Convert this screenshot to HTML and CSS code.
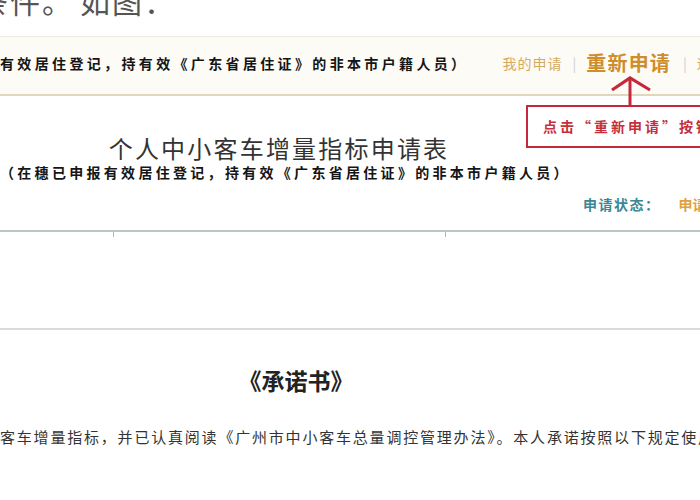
FILE: index.html
```html
<!DOCTYPE html>
<html lang="zh-CN">
<head>
<meta charset="utf-8">
<title>个人中小客车增量指标申请表</title>
<link rel="stylesheet" href="styles.css">
</head>
<body>
<div class="page">
  <p class="intro">条件。<span class="intro-gap">如图：</span></p>
  <div class="bar">
    <span class="bar-desc">有效居住登记，持有效《广东省居住证》的非本市户籍人员）</span>
    <nav class="bar-links">
      <a class="link-small">我的申请</a><span class="sep">|</span><a class="link-big">重新申请</a><span class="sep">|</span><a class="link-small">退出</a>
    </nav>
  </div>
  <header class="form-head">
    <h1 class="form-title">个人中小客车增量指标申请表</h1>
    <p class="form-subtitle">（在穗已申报有效居住登记，持有效《广东省居住证》的非本市户籍人员）</p>
  </header>
  <div class="status">
    <span class="status-label">申请状态：</span><span class="status-value">申请中</span>
  </div>
  <div class="table-head"><span class="col"></span><span class="col"></span><span class="col"></span></div>
  <div class="table-body"></div>
  <section class="pledge">
    <h2 class="pledge-title">《承诺书》</h2>
    <p class="pledge-text">客车增量指标，并已认真阅读《广州市中小客车总量调控管理办法》。本人承诺按照以下规定使用</p>
  </section>

  <svg class="callout-arrow" width="50" height="34" viewBox="0 0 50 34">
    <path d="M22 2 L22 32" stroke="#c4283a" stroke-width="3" fill="none"/>
    <path d="M4 14 L22 2 L42 14" stroke="#c4283a" stroke-width="3.2" fill="none" stroke-linejoin="miter"/>
  </svg>
  <div class="callout-box">点击“重新申请”按钮</div>
</div>
</body>
</html>
```
FILE: styles.css
```css
html, body {
  margin: 0;
  padding: 0;
  background: #ffffff;
}
body {
  font-family: "Noto Sans CJK SC", "Noto Sans", sans-serif;
  color: #222;
}
.page {
  position: relative;
  width: 700px;
  height: 500px;
  overflow: hidden;
  white-space: nowrap;
}
.intro {
  margin: -15px 0 21px -22px;
  font-size: 30px;
  line-height: 30px;
  letter-spacing: 2px;
  color: #555;
  font-weight: 400;
}
.intro-gap {
  margin-left: 6px;
}
.bar {
  display: flex;
  align-items: center;
  height: 51px;
  padding-bottom: 6px;
  border-top: 1px solid #efe9dd;
  border-bottom: 2px solid #e4d6bc;
  background: #fdfbf6;
}
.bar-desc {
  font-size: 14px;
  font-weight: 700;
  letter-spacing: 3.35px;
  color: #151515;
}
.bar-links {
  display: flex;
  align-items: center;
  margin-left: 34px;
  gap: 8px;
}
.link-small {
  font-size: 14px;
  letter-spacing: 1px;
  color: #d4aa62;
}
.link-big {
  font-size: 20px;
  font-weight: 700;
  letter-spacing: 1.2px;
  color: #cf8d2c;
  margin-right: 2px;
}
.sep {
  font-size: 14px;
  color: #cfcfcf;
  margin: 0 2px;
}
.form-head {
  width: 558px;
  margin-top: 39px;
  text-align: center;
}
.form-title {
  margin: 0;
  font-size: 24px;
  line-height: 26px;
  font-weight: 400;
  letter-spacing: 2.2px;
  color: #333;
}
.form-subtitle {
  margin: 2px 0 0;
  font-size: 14px;
  line-height: 18px;
  font-weight: 700;
  letter-spacing: 3.3px;
  color: #151515;
}
.status {
  display: flex;
  gap: 18px;
  margin-top: 13px;
  padding-left: 583px;
  font-size: 14px;
  line-height: 20px;
  font-weight: 700;
}
.status-label {
  color: #3c8794;
  letter-spacing: 1.5px;
}
.status-value {
  color: #e0a040;
}
.table-head {
  display: grid;
  grid-template-columns: 113px 332px 1fr;
  height: 5px;
  margin-top: 16px;
  border-top: 2px solid #b9c7c7;
}
.table-head .col + .col {
  border-left: 1px solid #b0b8b8;
}
.table-body {
  height: 91px;
  border-bottom: 2px solid #dadada;
}
.pledge {
  width: 592px;
}
.pledge-title {
  margin: 36px 0 0;
  font-size: 23px;
  line-height: 28px;
  font-weight: 700;
  text-align: center;
  color: #222;
}
.pledge-text {
  margin: 33px 0 0;
  font-size: 15px;
  line-height: 20px;
  letter-spacing: 1.8px;
  color: #333;
}
.callout-arrow {
  position: absolute;
  left: 608px;
  top: 76px;
}
.callout-box {
  position: absolute;
  left: 526px;
  top: 105px;
  width: 200px;
  height: 39px;
  padding-left: 15px;
  border: 2px solid #c4283a;
  background: #ffffff;
  font-size: 14px;
  line-height: 39px;
  font-weight: 700;
  letter-spacing: 3px;
  color: #c4303c;
}
```
